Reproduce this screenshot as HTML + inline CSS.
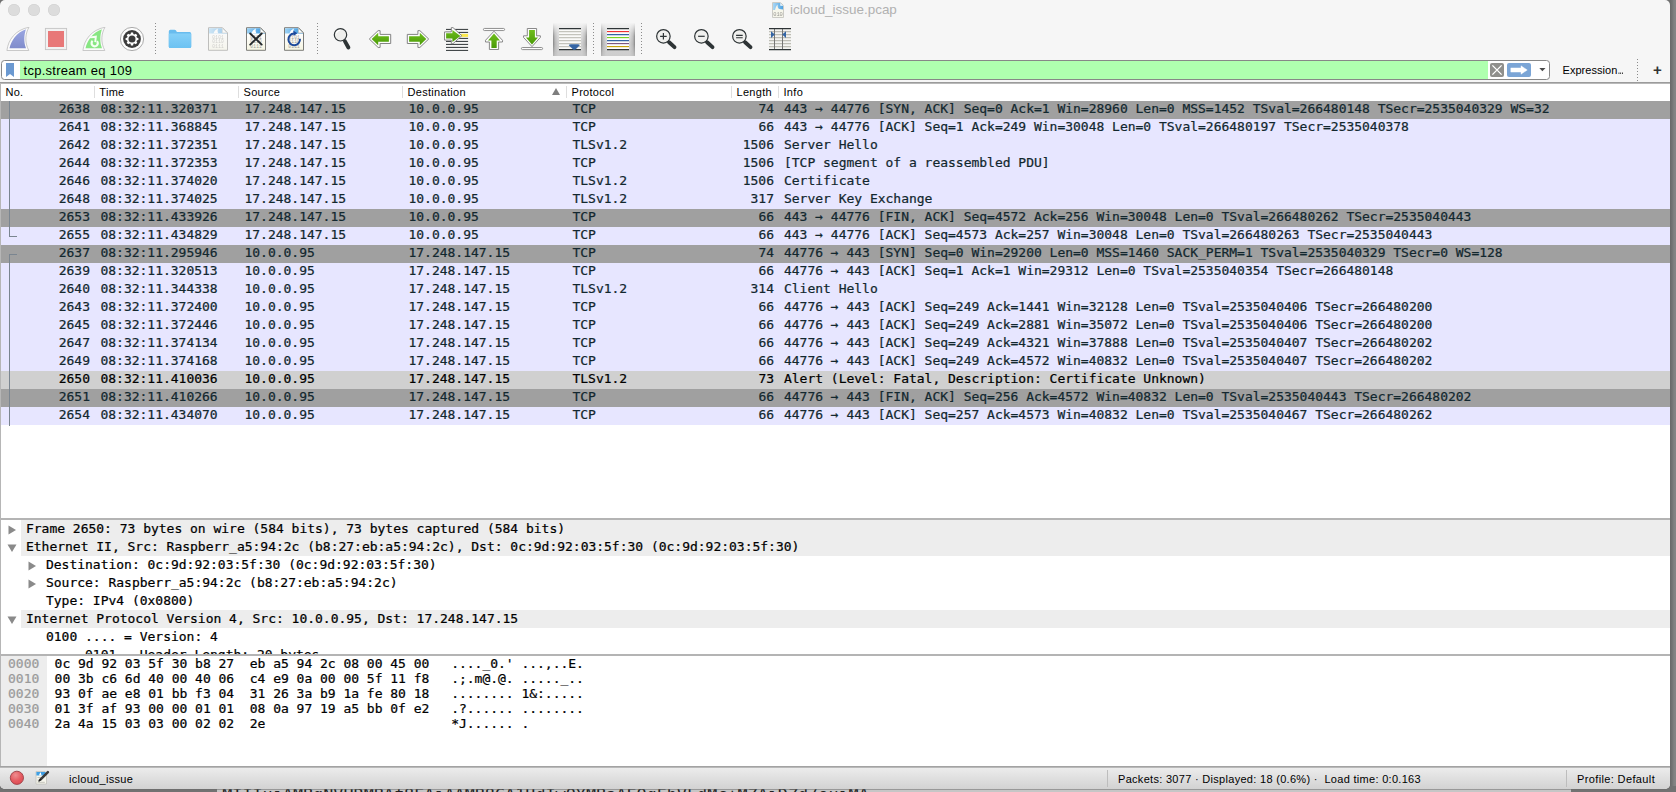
<!DOCTYPE html>
<html lang="en"><head><meta charset="utf-8"><title>icloud_issue.pcap</title>
<style>
html,body{margin:0;padding:0}
body{width:1676px;height:792px;overflow:hidden;position:relative;background:#7d7d7d;font-family:"Liberation Sans",sans-serif;color:#000}
#desk{position:absolute;left:0;top:0;width:1676px;height:792px;background:linear-gradient(to right,#6b6b6b 0,#727272 2px,#828282 4px,#858585 6px) no-repeat 1670px 0/6px 786px,#727272}
#behind{position:absolute;left:217px;top:788px;width:1354px;height:4px;background:#c6c6c6;overflow:hidden}
#behind span{position:absolute;left:5.2px;top:-3.3px;font:16.8px/20px "DejaVu Sans Mono","Liberation Mono",monospace;color:#222;white-space:pre}
#win{position:absolute;left:0;top:0;width:1670px;height:789px;background:#f6f6f6;border-radius:5px 5px 5px 5px;overflow:hidden;box-shadow:0 0 0 0.5px #6a6a6a}
#titlebar{position:absolute;left:0;top:0;width:1670px;height:22px}
.tl{position:absolute;top:4px;width:12px;height:12px;border-radius:50%;background:#dcdcdc;box-shadow:inset 0 0 0 0.5px #cfcfcf}
#title{position:absolute;left:772px;top:2px;height:18px;white-space:nowrap}
#title svg{position:absolute;left:0;top:0}
#title span{position:absolute;left:18px;top:0;font-size:13.45px;line-height:18px;color:#b1b1b1;letter-spacing:0;transform:translateY(-0.6px)}
#toolbar{position:absolute;left:0;top:22px;width:1670px;height:36px}
#toolbar svg{position:absolute}
.vsep{position:absolute;width:1px;background-image:linear-gradient(#8c8c8c 34%,transparent 34%);background-size:1px 3px}
.pressed{position:absolute;top:1px;height:33px;width:34px;background:linear-gradient(#f4f4f4 0,#dfdfdf 28%,#d1d1d1 60%,#cdcdcd 100%)}
.pressed::before,.pressed::after{content:"";position:absolute;top:0;bottom:0;width:5px;-webkit-mask-image:linear-gradient(rgba(0,0,0,0) 0,#000 40%,#000 65%,rgba(0,0,0,.35) 100%);mask-image:linear-gradient(rgba(0,0,0,0) 0,#000 40%,#000 65%,rgba(0,0,0,.35) 100%)}
.pressed::before{left:0;background:linear-gradient(to right,rgba(0,0,0,.36),rgba(0,0,0,.12) 40%,rgba(0,0,0,0))}
.pressed::after{right:0;background:linear-gradient(to left,rgba(0,0,0,.36),rgba(0,0,0,.12) 40%,rgba(0,0,0,0))}
#filter{position:absolute;left:0;top:58px;width:1670px;height:24px}
#fbox{position:absolute;left:1px;top:2px;width:1549px;height:19px;border:1px solid #878787;border-radius:3.5px;background:#fff;overflow:hidden;box-sizing:border-box;height:20px}
#fbm{position:absolute;left:4px;top:2px}
#fgreen{position:absolute;left:18px;top:0;width:1468px;height:18px;background:#afffaf}
#fgreen span{position:absolute;left:3.5px;top:1px;font-size:13px;line-height:18px;white-space:pre;letter-spacing:0.27px}
#fx{position:absolute;left:1488px;top:2px}
#fgo{position:absolute;left:1505px;top:2px}
#fdd{position:absolute;left:1537px;top:7px}
#fx svg,#fgo svg,#fdd svg,#fbm svg{display:block}
#expr{position:absolute;left:1562.5px;top:5px;font-size:11px;line-height:14px;white-space:pre;letter-spacing:0.05px}
#expr i{font-style:normal;font-size:9px;letter-spacing:0;font-weight:bold;margin-left:0.4px;display:inline-block;transform:scaleX(0.6);transform-origin:0 100%}
#plus{position:absolute;left:1653px;top:2px;font-size:15px;line-height:20px;font-weight:bold;color:#333}
#hline{position:absolute;left:0;top:82px;width:1670px;height:2px;background:linear-gradient(#9b9b9b 0,#9b9b9b 50%,#b9b9b9 50%,#b9b9b9 100%)}
#plist{position:absolute;left:0;top:0;width:1670px;height:518px}
#phead{position:absolute;left:1px;top:84px;width:1669px;height:17px;background:#fff}
#phead span{position:absolute;top:1px;font-size:11px;line-height:14px;white-space:pre;margin-left:-1px;letter-spacing:0.3px}
#phead b{position:absolute;top:2px;width:1px;height:12px;background:#dedede;margin-left:-1px}
#plist{background:linear-gradient(#fff,#fff) no-repeat 1px 84px/1669px 434px}
.pr{position:absolute;left:1px;width:1669px;height:18px;font:13px/18px "DejaVu Sans Mono","Liberation Mono",monospace;color:#12272e;white-space:pre;letter-spacing:-0.015px}
.pr.d{background:#a0a0a0}
.pr.t{background:#e7e6ff}
.pr.s{background:#d0d0d0;color:#000}
.c{position:absolute;top:-1px}
.no{right:1580px}
.tm{left:99.5px}
.sr{left:243.5px}
.ds{left:407.5px}
.pt{left:571.5px}
.ln{right:896px}
.inf{left:783px}
.rel{position:absolute;background:#7a8590}
.split{position:absolute;left:0;width:1670px;height:2px;background:#b4b4b4}
#details{position:absolute;left:1px;top:520px;width:1669px;height:134px;background:#fff;overflow:hidden;font:13px/18px "DejaVu Sans Mono","Liberation Mono",monospace;white-space:pre}
.dr{position:absolute;left:0;width:1669px;height:18px}
.dbg{position:absolute;left:20px;top:0;width:1649px;height:18px;background:#ededed}
.dt{position:absolute;top:0px;letter-spacing:-0.015px}
.tri{position:absolute;top:5px}
#bytes{position:absolute;left:1px;top:656px;width:1669px;height:110px;background:#fff;overflow:hidden;font:13px/15px "DejaVu Sans Mono","Liberation Mono",monospace;white-space:pre}
#offbg{position:absolute;left:0;top:0;width:46px;height:110px;background:#ededed}
.hr{position:absolute;left:0;width:1669px;height:15px}
.ho{position:absolute;left:7px;color:#9a9a9a}
.hh{position:absolute;left:53.6px;letter-spacing:-0.02px}
.ha{position:absolute;left:450.2px;letter-spacing:-0.02px}
#status{position:absolute;left:0;top:766px;width:1670px;height:23px;background:linear-gradient(#a3a3a3 0,#a3a3a3 1px,#b9b9b9 1px,#b9b9b9 2px,#ececec 2px,#d2d2d2 100%);font-size:11px;letter-spacing:0.3px}
#status span{position:absolute;top:6px;line-height:14px;white-space:pre}
#sfile{left:69px}
#spk{left:1118px}
#sprof{left:1577px;letter-spacing:0.37px}
.ssep{position:absolute;top:4px;width:1px;height:17px;background:#bdbdbd}
#lborder{position:absolute;left:0;top:84px;width:1px;height:683px;background:#b6b6b6}
.pr,#details,#bytes{-webkit-text-stroke:0.22px}

</style></head>
<body>
<div id="desk"></div>
<div id="behind"><span>MIIIujAMBgNVHRMBAf8EAjAAMB8GA1UdIwQYMBaAFOqFbVLdMc+MZAiDZd/ouiMA</span></div>
<div id="win">
<div id="titlebar">
 <i class="tl" style="left:8px"></i><i class="tl" style="left:28px"></i><i class="tl" style="left:48px"></i>
 <div id="title"><svg width="12" height="16" viewBox="0 0 12 16" opacity="0.85"><path d="M0.5 0.5 H8.5 L11.5 3.5 V15.5 H0.5 Z" fill="#f7f6ea" stroke="#c4c4be"/><path d="M1 1 H8.3 L11 3.7 V8 H1 Z" fill="url(#gT)"/><path d="M8.3 1 L8.3 3.7 L11 3.7 Z" fill="#fff"/><path d="M1 8 H3 C3.6 5.5 4.4 3.6 5.6 2.4 C5.4 4.6 6 6.4 7.4 7 L11 7.4 V8.6 H1 Z" fill="#f7f6ea"/><text x="1.3" y="13.8" font-family="Liberation Mono, monospace" font-size="5.4" fill="#8a8a86" textLength="9.4">010</text></svg><span>icloud_issue.pcap</span></div>
</div>
<div id="toolbar">
<svg width="0" height="0" style="position:absolute"><defs>
<linearGradient id="gB" x1="0" y1="0" x2="0" y2="1"><stop offset="0" stop-color="#9aa6e2"/><stop offset="1" stop-color="#808ccb"/></linearGradient>
<linearGradient id="gG" x1="0" y1="0" x2="0" y2="1"><stop offset="0" stop-color="#6fbe1c"/><stop offset="1" stop-color="#4a9a08"/></linearGradient>
<linearGradient id="gF" x1="0" y1="0" x2="0" y2="1"><stop offset="0" stop-color="#86d0f8"/><stop offset="1" stop-color="#6cc2f2"/></linearGradient>
<linearGradient id="gT" x1="0" y1="0" x2="1" y2="0"><stop offset="0" stop-color="#9ed2f4"/><stop offset="1" stop-color="#2f93df"/></linearGradient>
<linearGradient id="gP" x1="0" y1="0" x2="0" y2="1"><stop offset="0.25" stop-color="#ffffff"/><stop offset="1" stop-color="#f6f5e2"/></linearGradient>
<g id="fileico">
 <path d="M2.5 0.7 H16.5 L21.5 5.7 V23.3 H2.5 Z" fill="url(#gP)" stroke="#7c7c78" stroke-width="1"/>
 <path d="M3 1.2 H16.3 L21 5.9 V6.6 H3 Z" fill="url(#gT)"/>
 <path d="M16.3 1.2 V5.9 H21 Z" fill="#fdfdfd" stroke="#aeaea6" stroke-width="0.6"/>
 <path d="M7.5 6.6 C8 4.2 9.5 2.4 12 1.4 C11.3 3.2 11.6 5 12.4 6.6 Z" fill="#fff"/>
 <text x="6.2" y="11.8" font-family="Liberation Mono, monospace" font-size="4.5" fill="#9c9c96" textLength="11.6">0101</text>
 <text x="6.2" y="16.3" font-family="Liberation Mono, monospace" font-size="4.5" fill="#9c9c96" textLength="11.6">0110</text>
 <text x="6.2" y="20.9" font-family="Liberation Mono, monospace" font-size="4.5" fill="#9c9c96" textLength="11.6">0111</text>
</g>
<g id="mag">
 <path d="M15.1 15.2 L20.5 20.1" stroke="#2e3436" stroke-width="3.9" stroke-linecap="round" fill="none"/><path d="M13.5 13.6 L15.1 15.2" stroke="#2e3436" stroke-width="2.2" fill="none"/>
 <circle cx="9.4" cy="9.3" r="6.75" fill="#f0f0ee" stroke="#2e3436" stroke-width="1.2"/>
</g>
</defs></svg>
<!-- start capture (blue fin) -->
<svg style="left:6px;top:5px" width="24" height="24" viewBox="0 0 24 24"><path d="M0.9 23.5 C2.2 13 9 3 23 0.2 C19.5 6 18.2 15 22.8 23.5 Z" fill="#fbfbfb" stroke="#bdbdbd" stroke-width="0.8"/><path d="M3.5 21.3 C5 14 10.5 5.5 19.9 2.3 C18 8 17.6 15 20 21.3 Z" fill="url(#gB)"/></svg>
<!-- stop -->
<svg style="left:44px;top:5px" width="24" height="24" viewBox="0 0 24 24"><rect x="1.4" y="1.4" width="21.2" height="21.2" fill="#f2f2f2" stroke="#c4c4c4" stroke-width="0.9"/><rect x="4" y="4" width="16" height="16" fill="#e87878"/></svg>
<!-- restart (green fin) -->
<svg style="left:82px;top:5px" width="24" height="24" viewBox="0 0 24 24"><path d="M0.9 23.5 C2.2 13 9 3 23 0.2 C19.5 6 18.2 15 22.8 23.5 Z" fill="#fbfbfb" stroke="#bdbdbd" stroke-width="0.8"/><path d="M3.5 21.3 C5 14 10.5 5.5 19.9 2.3 C18 8 17.6 15 20 21.3 Z" fill="#88e683"/><path d="M15.00 14.13 A3.1 3.1 0 1 1 10.63 13.90" stroke="#f6fff4" stroke-width="2.2" fill="none"/><path d="M7.9 9.5 L14.9 8.4 L14.2 15.2 L12.3 15 L12.7 11 L8.1 11.3 Z" fill="#f6fff4"/></svg>
<!-- options (gear) -->
<svg style="left:120px;top:5px" width="24" height="24" viewBox="0 0 24 24"><circle cx="12" cy="12" r="11.6" fill="#fdfdfd" stroke="#979797" stroke-width="0.8"/><circle cx="12" cy="12" r="8.9" fill="#3c3c3c"/><g fill="#fff"><circle cx="12" cy="12" r="5.1"/><g id="tooth"><path d="M10.9 5.6 H13.1 L13.5 8 H10.5 Z M10.9 18.4 H13.1 L13.5 16 H10.5 Z"/></g><use href="#tooth" transform="rotate(45 12 12)"/><use href="#tooth" transform="rotate(90 12 12)"/><use href="#tooth" transform="rotate(135 12 12)"/></g><circle cx="12" cy="12" r="3.5" fill="#3c3c3c"/></svg>
<div class="vsep" style="left:155px;top:1px;height:32px"></div>
<!-- open folder -->
<svg style="left:168px;top:5px" width="24" height="24" viewBox="0 0 24 24"><path d="M0.8 4.4 Q0.8 2.8 2.4 2.8 H6.6 Q7.6 2.8 8.2 3.8 L8.9 5 H21.6 Q23.2 5 23.2 6.6 V19.4 Q23.2 21 21.6 21 H2.4 Q0.8 21 0.8 19.4 Z" fill="#69bcee"/><path d="M0.8 7.6 Q0.8 6.4 2.2 6.4 H21.8 Q23.2 6.4 23.2 7.6 V19.4 Q23.2 21 21.6 21 H2.4 Q0.8 21 0.8 19.4 Z" fill="url(#gF)"/></svg>
<!-- save (disabled) -->
<svg style="left:206px;top:5px;opacity:0.45" width="24" height="24" viewBox="0 0 24 24"><use href="#fileico"/></svg>
<!-- close -->
<svg style="left:244px;top:5px" width="24" height="24" viewBox="0 0 24 24"><use href="#fileico"/><path d="M6.2 6.5 L17.7 17.6 M17.7 6.5 L6.2 17.6" stroke="#23272a" stroke-width="1.9" stroke-linecap="round" fill="none"/></svg>
<!-- reload -->
<svg style="left:282px;top:5px" width="24" height="24" viewBox="0 0 24 24"><use href="#fileico"/><path d="M17.98 11.89 A5.8 5.8 0 1 1 12.00 6.60" stroke="#1d4a9c" stroke-width="2" fill="none"/><path d="M11.3 3.6 L15.3 6.2 L11.7 9 Z" fill="#1d4a9c"/></svg>
<div class="vsep" style="left:317px;top:1px;height:32px"></div>
<!-- find -->
<svg style="left:330px;top:5px" width="24" height="24" viewBox="0 0 24 24"><path d="M15 14.4 L18.4 20.5" stroke="#2e3436" stroke-width="3.9" stroke-linecap="round" fill="none"/><path d="M13 12 L15 14.4" stroke="#2e3436" stroke-width="2" fill="none"/><circle cx="10.5" cy="7.8" r="6.2" fill="#eeeeec" stroke="#2e3436" stroke-width="1.2"/><path d="M6.3 6.4 A4.7 4.7 0 0 1 10.2 3.2" stroke="#fff" stroke-width="1.1" fill="none"/></svg>
<!-- back -->
<svg style="left:368px;top:5px" width="24" height="24" viewBox="0 0 24 24"><path d="M1.3 12 L10.1 3.65 H12.1 V7.4 H22.7 V16.5 H12.1 V20.45 H10.1 Z" fill="#fcfcfc" stroke="#7d7d7d" stroke-width="0.95" stroke-linejoin="round"/><path d="M3.7 12 L10.2 5.8 V9.2 H20.9 V14.8 H10.2 V18.2 Z" fill="url(#gG)"/></svg>
<!-- forward -->
<svg style="left:406px;top:5px" width="24" height="24" viewBox="0 0 24 24"><g transform="translate(24 0) scale(-1 1)"><path d="M1.3 12 L10.1 3.65 H12.1 V7.4 H22.7 V16.5 H12.1 V20.45 H10.1 Z" fill="#fcfcfc" stroke="#7d7d7d" stroke-width="0.95" stroke-linejoin="round"/><path d="M3.7 12 L10.2 5.8 V9.2 H20.9 V14.8 H10.2 V18.2 Z" fill="url(#gG)"/></g></svg>
<!-- go to packet -->
<svg style="left:444px;top:5px;overflow:visible" width="25" height="24" viewBox="0 0 25 24"><path d="M17 8.4 H24.1" stroke="#fce94f" stroke-width="3"/><path d="M2 2.4 H24.1 M2 5.4 H24.1 M2 8.4 H17 M2 11.4 H24.1 M2 14.4 H24.1 M2 17.4 H24.1 M2 20.4 H24.1 M2 23.4 H24.1" stroke="#2e3436" stroke-width="1"/><path d="M0.5 4.9 H7.3 V0.6 H9 L17.8 8.7 L9 16.7 H7.3 V13.1 H0.5 Z" fill="#fcfcfc" stroke="#7d7d7d" stroke-width="0.9" stroke-linejoin="round"/><path d="M2.1 6.3 H8.4 V2.9 L16.4 8.9 L8.4 15 V11.6 H2.1 Z" fill="url(#gG)"/></svg>
<!-- go first -->
<svg style="left:482px;top:5px" width="24" height="24" viewBox="0 0 24 24"><path d="M12 4.2 L3.5 13.3 V15 H7.4 V22.5 H16.6 V15 H20.5 V13.3 Z" fill="#fcfcfc" stroke="#7d7d7d" stroke-width="0.9" stroke-linejoin="round"/><path d="M12 6.6 L6 13.4 H9.4 V20.9 H14.7 V13.4 H18 Z" fill="url(#gG)"/><rect x="1.4" y="1.45" width="21.2" height="2.1" rx="1.05" fill="#fcfcfc" stroke="#7d7d7d" stroke-width="0.85"/></svg>
<!-- go last -->
<svg style="left:520px;top:5px" width="24" height="24" viewBox="0 0 24 24"><path d="M12 19.6 L3.5 10.4 V8.8 H7.3 V1.5 H16.6 V8.8 H20.4 V10.4 Z" fill="#fcfcfc" stroke="#7d7d7d" stroke-width="0.9" stroke-linejoin="round"/><path d="M12 17.5 L5.9 10.4 H9.1 V3.1 H14.9 V10.4 H18 Z" fill="url(#gG)"/><rect x="1.4" y="20.5" width="21.2" height="2.1" rx="1.05" fill="#fcfcfc" stroke="#7d7d7d" stroke-width="0.85"/></svg>
<!-- autoscroll (pressed) -->
<div class="pressed" style="left:553px"></div>
<svg style="left:558px;top:5px" width="24" height="24" viewBox="0 0 24 24"><rect x="1" y="1" width="22" height="22" fill="#fafaf8"/><path d="M1 4.6 H23 M1 7.6 H23 M1 10.6 H23 M1 13.6 H23 M1 16.6 H23 M1 19.6 H23" stroke="#c4c4bc" stroke-width="1.1"/><path d="M1 1.6 H23 M1 22.6 H23" stroke="#2e3436" stroke-width="1.1"/><path d="M10.8 18.2 Q11 17.2 13 17.2 H19.6 Q21.6 17.2 21.8 18.2 L17.2 22.8 H15.4 Z" fill="#3465a4"/></svg>
<div class="vsep" style="left:593px;top:1px;height:32px"></div>
<!-- colorize (pressed) -->
<div class="pressed" style="left:601px"></div>
<svg style="left:606px;top:5px" width="24" height="24" viewBox="0 0 24 24"><rect x="1" y="1" width="22" height="22" fill="#fdfdfd"/><g stroke-width="1.1"><path d="M1 1.6 H23 M1 22.6 H23" stroke="#2e3436"/><path d="M1 4.6 H23" stroke="#ef2929"/><path d="M1 7.6 H23 M1 13.6 H23" stroke="#3465a4"/><path d="M1 10.6 H23" stroke="#73d216"/><path d="M1 16.6 H23" stroke="#75507b"/><path d="M1 19.6 H23" stroke="#c4a000"/></g></svg>
<div class="vsep" style="left:641px;top:1px;height:32px"></div>
<!-- zoom in -->
<svg style="left:654px;top:5px" width="24" height="24" viewBox="0 0 24 24"><use href="#mag"/><path d="M6.1 9.3 H12.7 M9.4 6 V12.6" stroke="#2e3436" stroke-width="1.2" fill="none"/></svg>
<!-- zoom out -->
<svg style="left:692px;top:5px" width="24" height="24" viewBox="0 0 24 24"><use href="#mag"/><path d="M6.1 9.3 H12.7" stroke="#2e3436" stroke-width="1.2" fill="none"/></svg>
<!-- zoom 1:1 -->
<svg style="left:730px;top:5px" width="24" height="24" viewBox="0 0 24 24"><use href="#mag"/><path d="M6.1 8.4 H12.7 M6.1 10.8 H12.7" stroke="#2e3436" stroke-width="1.1" fill="none"/></svg>
<!-- resize columns -->
<svg style="left:768px;top:5px" width="24" height="24" viewBox="0 0 24 24"><rect x="1" y="1" width="22" height="22" fill="#f4f4f2"/><path d="M1 4.6 H23 M1 7.6 H23 M1 10.6 H23 M1 13.6 H23 M1 16.6 H23 M1 19.6 H23" stroke="#bdbdb5" stroke-width="1.1"/><path d="M6.5 1.6 V22.6 M14.5 1.6 V22.6" stroke="#757575" stroke-width="1"/><path d="M1 1.6 H23 M1 22.6 H23" stroke="#2e3436" stroke-width="1.1"/><path d="M3 4.2 L6.8 7.6 L3 11 Z M18 4.2 L14.2 7.6 L18 11 Z" fill="#3465a4"/></svg>

</div>
<div id="filter">
 <div id="fbox">
  <div id="fbm"><svg width="8" height="14" viewBox="0 0 8 14"><path d="M0 0 H8 V14 L4 11 L0 14 Z" fill="#6b99d1"/></svg></div>
  <div id="fgreen"><span>tcp.stream eq 109</span></div>
  <div id="fx"><svg width="14" height="14" viewBox="0 0 14 14"><rect width="14" height="14" rx="2" fill="#8f8f8c"/><path d="M2.4 2.4 L11.6 11.6 M11.6 2.4 L2.4 11.6" stroke="#fff" stroke-width="1.3" fill="none"/></svg></div>
  <div id="fgo"><svg width="24" height="14" viewBox="0 0 24 14"><rect width="24" height="14" rx="2" fill="#7ba5d6"/><path d="M3.8 4.9 H14 V2.8 L20.3 7 L14 11.2 V9.1 H3.8 Z" fill="#fff" stroke="#fff" stroke-width="0.4" stroke-linejoin="round"/></svg></div>
  <div id="fdd"><svg width="7" height="4" viewBox="0 0 7 4"><path d="M0.3 0 H6.5 L3.4 3.3 Z" fill="#4a4a4a"/></svg></div>
 </div>
 <span id="expr">Expression<i>…</i></span>
 <div class="vsep" style="left:1637px;top:1px;height:22px"></div>
 <span id="plus">+</span>
</div>
<div id="hline"></div>
<div id="plist">
 <div id="phead">
  <span style="left:5.4px">No.</span><b style="left:94px"></b>
  <span style="left:99.3px">Time</span><b style="left:238px"></b>
  <span style="left:243.5px">Source</span><b style="left:402px"></b>
  <span style="left:407.5px">Destination</span><svg style="position:absolute;left:551px;top:4px" width="8" height="7" viewBox="0 0 8 7"><path d="M0 7 L4 0 L8 7 Z" fill="#7e7e7e"/></svg><b style="left:566px"></b>
  <span style="left:571.5px">Protocol</span><b style="left:731px"></b>
  <span style="left:736.5px">Length</span><b style="left:778px"></b>
  <span style="left:783.5px">Info</span>
 </div>
<div class="pr d" style="top:101px"><span class="c no">2638</span><span class="c tm">08:32:11.320371</span><span class="c sr">17.248.147.15</span><span class="c ds">10.0.0.95</span><span class="c pt">TCP</span><span class="c ln">74</span><span class="c inf">443 → 44776 [SYN, ACK] Seq=0 Ack=1 Win=28960 Len=0 MSS=1452 TSval=266480148 TSecr=2535040329 WS=32</span></div>
<div class="pr t" style="top:119px"><span class="c no">2641</span><span class="c tm">08:32:11.368845</span><span class="c sr">17.248.147.15</span><span class="c ds">10.0.0.95</span><span class="c pt">TCP</span><span class="c ln">66</span><span class="c inf">443 → 44776 [ACK] Seq=1 Ack=249 Win=30048 Len=0 TSval=266480197 TSecr=2535040378</span></div>
<div class="pr t" style="top:137px"><span class="c no">2642</span><span class="c tm">08:32:11.372351</span><span class="c sr">17.248.147.15</span><span class="c ds">10.0.0.95</span><span class="c pt">TLSv1.2</span><span class="c ln">1506</span><span class="c inf">Server Hello</span></div>
<div class="pr t" style="top:155px"><span class="c no">2644</span><span class="c tm">08:32:11.372353</span><span class="c sr">17.248.147.15</span><span class="c ds">10.0.0.95</span><span class="c pt">TCP</span><span class="c ln">1506</span><span class="c inf">[TCP segment of a reassembled PDU]</span></div>
<div class="pr t" style="top:173px"><span class="c no">2646</span><span class="c tm">08:32:11.374020</span><span class="c sr">17.248.147.15</span><span class="c ds">10.0.0.95</span><span class="c pt">TLSv1.2</span><span class="c ln">1506</span><span class="c inf">Certificate</span></div>
<div class="pr t" style="top:191px"><span class="c no">2648</span><span class="c tm">08:32:11.374025</span><span class="c sr">17.248.147.15</span><span class="c ds">10.0.0.95</span><span class="c pt">TLSv1.2</span><span class="c ln">317</span><span class="c inf">Server Key Exchange</span></div>
<div class="pr d" style="top:209px"><span class="c no">2653</span><span class="c tm">08:32:11.433926</span><span class="c sr">17.248.147.15</span><span class="c ds">10.0.0.95</span><span class="c pt">TCP</span><span class="c ln">66</span><span class="c inf">443 → 44776 [FIN, ACK] Seq=4572 Ack=256 Win=30048 Len=0 TSval=266480262 TSecr=2535040443</span></div>
<div class="pr t" style="top:227px"><span class="c no">2655</span><span class="c tm">08:32:11.434829</span><span class="c sr">17.248.147.15</span><span class="c ds">10.0.0.95</span><span class="c pt">TCP</span><span class="c ln">66</span><span class="c inf">443 → 44776 [ACK] Seq=4573 Ack=257 Win=30048 Len=0 TSval=266480263 TSecr=2535040443</span></div>
<div class="pr d" style="top:245px"><span class="c no">2637</span><span class="c tm">08:32:11.295946</span><span class="c sr">10.0.0.95</span><span class="c ds">17.248.147.15</span><span class="c pt">TCP</span><span class="c ln">74</span><span class="c inf">44776 → 443 [SYN] Seq=0 Win=29200 Len=0 MSS=1460 SACK_PERM=1 TSval=2535040329 TSecr=0 WS=128</span></div>
<div class="pr t" style="top:263px"><span class="c no">2639</span><span class="c tm">08:32:11.320513</span><span class="c sr">10.0.0.95</span><span class="c ds">17.248.147.15</span><span class="c pt">TCP</span><span class="c ln">66</span><span class="c inf">44776 → 443 [ACK] Seq=1 Ack=1 Win=29312 Len=0 TSval=2535040354 TSecr=266480148</span></div>
<div class="pr t" style="top:281px"><span class="c no">2640</span><span class="c tm">08:32:11.344338</span><span class="c sr">10.0.0.95</span><span class="c ds">17.248.147.15</span><span class="c pt">TLSv1.2</span><span class="c ln">314</span><span class="c inf">Client Hello</span></div>
<div class="pr t" style="top:299px"><span class="c no">2643</span><span class="c tm">08:32:11.372400</span><span class="c sr">10.0.0.95</span><span class="c ds">17.248.147.15</span><span class="c pt">TCP</span><span class="c ln">66</span><span class="c inf">44776 → 443 [ACK] Seq=249 Ack=1441 Win=32128 Len=0 TSval=2535040406 TSecr=266480200</span></div>
<div class="pr t" style="top:317px"><span class="c no">2645</span><span class="c tm">08:32:11.372446</span><span class="c sr">10.0.0.95</span><span class="c ds">17.248.147.15</span><span class="c pt">TCP</span><span class="c ln">66</span><span class="c inf">44776 → 443 [ACK] Seq=249 Ack=2881 Win=35072 Len=0 TSval=2535040406 TSecr=266480200</span></div>
<div class="pr t" style="top:335px"><span class="c no">2647</span><span class="c tm">08:32:11.374134</span><span class="c sr">10.0.0.95</span><span class="c ds">17.248.147.15</span><span class="c pt">TCP</span><span class="c ln">66</span><span class="c inf">44776 → 443 [ACK] Seq=249 Ack=4321 Win=37888 Len=0 TSval=2535040407 TSecr=266480202</span></div>
<div class="pr t" style="top:353px"><span class="c no">2649</span><span class="c tm">08:32:11.374168</span><span class="c sr">10.0.0.95</span><span class="c ds">17.248.147.15</span><span class="c pt">TCP</span><span class="c ln">66</span><span class="c inf">44776 → 443 [ACK] Seq=249 Ack=4572 Win=40832 Len=0 TSval=2535040407 TSecr=266480202</span></div>
<div class="pr s" style="top:371px"><span class="c no">2650</span><span class="c tm">08:32:11.410036</span><span class="c sr">10.0.0.95</span><span class="c ds">17.248.147.15</span><span class="c pt">TLSv1.2</span><span class="c ln">73</span><span class="c inf">Alert (Level: Fatal, Description: Certificate Unknown)</span></div>
<div class="pr d" style="top:389px"><span class="c no">2651</span><span class="c tm">08:32:11.410266</span><span class="c sr">10.0.0.95</span><span class="c ds">17.248.147.15</span><span class="c pt">TCP</span><span class="c ln">66</span><span class="c inf">44776 → 443 [FIN, ACK] Seq=256 Ack=4572 Win=40832 Len=0 TSval=2535040443 TSecr=266480202</span></div>
<div class="pr t" style="top:407px"><span class="c no">2654</span><span class="c tm">08:32:11.434070</span><span class="c sr">10.0.0.95</span><span class="c ds">17.248.147.15</span><span class="c pt">TCP</span><span class="c ln">66</span><span class="c inf">44776 → 443 [ACK] Seq=257 Ack=4573 Win=40832 Len=0 TSval=2535040467 TSecr=266480262</span></div>
 <div class="rel" style="left:9px;top:101px;width:1px;height:135px"></div>
 <div class="rel" style="left:9px;top:236px;width:8px;height:1px"></div>
 <div class="rel" style="left:9px;top:254px;width:8px;height:1px"></div>
 <div class="rel" style="left:9px;top:254px;width:1px;height:172px"></div>
</div>
<div class="split" style="top:518px"></div>
<div id="details">
<div class="dr top" style="top:0px"><div class="dbg"></div><svg class="tri" style="left:6.5px" width="9" height="10" viewBox="0 0 9 10"><path d="M0.5 0.5 L8 5 L0.5 9.5 Z" fill="#8a8a8a"/></svg><span class="dt" style="left:25px">Frame 2650: 73 bytes on wire (584 bits), 73 bytes captured (584 bits)</span></div>
<div class="dr top" style="top:18px"><div class="dbg"></div><svg class="tri" style="left:6.0px;top:6px" width="10" height="9" viewBox="0 0 10 9"><path d="M0.5 0.5 L9.5 0.5 L5 8 Z" fill="#8a8a8a"/></svg><span class="dt" style="left:25px">Ethernet II, Src: Raspberr_a5:94:2c (b8:27:eb:a5:94:2c), Dst: 0c:9d:92:03:5f:30 (0c:9d:92:03:5f:30)</span></div>
<div class="dr" style="top:36px"><svg class="tri" style="left:26.5px" width="9" height="10" viewBox="0 0 9 10"><path d="M0.5 0.5 L8 5 L0.5 9.5 Z" fill="#8a8a8a"/></svg><span class="dt" style="left:45px">Destination: 0c:9d:92:03:5f:30 (0c:9d:92:03:5f:30)</span></div>
<div class="dr" style="top:54px"><svg class="tri" style="left:26.5px" width="9" height="10" viewBox="0 0 9 10"><path d="M0.5 0.5 L8 5 L0.5 9.5 Z" fill="#8a8a8a"/></svg><span class="dt" style="left:45px">Source: Raspberr_a5:94:2c (b8:27:eb:a5:94:2c)</span></div>
<div class="dr" style="top:72px"><span class="dt" style="left:45px">Type: IPv4 (0x0800)</span></div>
<div class="dr top" style="top:90px"><div class="dbg"></div><svg class="tri" style="left:6.0px;top:6px" width="10" height="9" viewBox="0 0 10 9"><path d="M0.5 0.5 L9.5 0.5 L5 8 Z" fill="#8a8a8a"/></svg><span class="dt" style="left:25px">Internet Protocol Version 4, Src: 10.0.0.95, Dst: 17.248.147.15</span></div>
<div class="dr" style="top:108px"><span class="dt" style="left:45px">0100 .... = Version: 4</span></div>
<div class="dr" style="top:126px"><span class="dt" style="left:45px">.... 0101 = Header Length: 20 bytes</span></div>
</div>
<div class="split" style="top:654px"></div>
<div id="bytes">
 <div id="offbg"></div>
<div class="hr" style="top:0px"><span class="ho">0000</span><span class="hh">0c 9d 92 03 5f 30 b8 27  eb a5 94 2c 08 00 45 00</span><span class="ha">...._0.' ...,..E.</span></div>
<div class="hr" style="top:15px"><span class="ho">0010</span><span class="hh">00 3b c6 6d 40 00 40 06  c4 e9 0a 00 00 5f 11 f8</span><span class="ha">.;.m@.@. ....._..</span></div>
<div class="hr" style="top:30px"><span class="ho">0020</span><span class="hh">93 0f ae e8 01 bb f3 04  31 26 3a b9 1a fe 80 18</span><span class="ha">........ 1&amp;:.....</span></div>
<div class="hr" style="top:45px"><span class="ho">0030</span><span class="hh">01 3f af 93 00 00 01 01  08 0a 97 19 a5 bb 0f e2</span><span class="ha">.?...... ........</span></div>
<div class="hr" style="top:60px"><span class="ho">0040</span><span class="hh">2a 4a 15 03 03 00 02 02  2e</span><span class="ha">*J...... .</span></div>
</div>
<div id="lborder"></div>
<div id="status">
 <svg style="position:absolute;left:9px;top:4px" width="16" height="16" viewBox="0 0 16 16"><defs><radialGradient id="gR" cx="0.4" cy="0.3" r="0.75"><stop offset="0" stop-color="#ee8e90"/><stop offset="0.6" stop-color="#e4595f"/><stop offset="1" stop-color="#de4c54"/></radialGradient></defs><circle cx="7.9" cy="7.8" r="6.6" fill="url(#gR)" stroke="#9b3e45" stroke-width="0.9"/></svg>
 <svg style="position:absolute;left:34px;top:2px" width="17" height="19" viewBox="0 0 17 19"><path d="M2 3.5 H11 L12.5 5 V16 H2 Z" fill="#f6f5ec" stroke="#c2c2bc" stroke-width="0.8"/><path d="M2.4 3.9 H11 L12.1 5 V7.4 H2.4 Z" fill="#3f9fe4"/><path d="M5 7.4 C5.4 6 6 5 7 4.3 C6.8 5.6 7.2 6.6 7.8 7.4 Z" fill="#fff"/><path d="M3.5 9.5 H8 M3.5 12 H6 M3.5 14.3 H10.8" stroke="#c4c4bc" stroke-width="1"/><path d="M13.9 4.1 L6.4 11.6" stroke="#3c3c3c" stroke-width="2.5" stroke-linecap="round"/><path d="M6.4 11.6 L5 13" stroke="#1c1c1c" stroke-width="1.4" stroke-linecap="round"/></svg>
 <span id="sfile">icloud_issue</span>
 <b class="ssep" style="left:1107px"></b>
 <span id="spk">Packets: 3077 · Displayed: 18 (0.6%) ·&nbsp; Load time: 0:0.163</span>
 <b class="ssep" style="left:1566px"></b>
 <span id="sprof">Profile: Default</span>
</div>
</div>
</body></html>
